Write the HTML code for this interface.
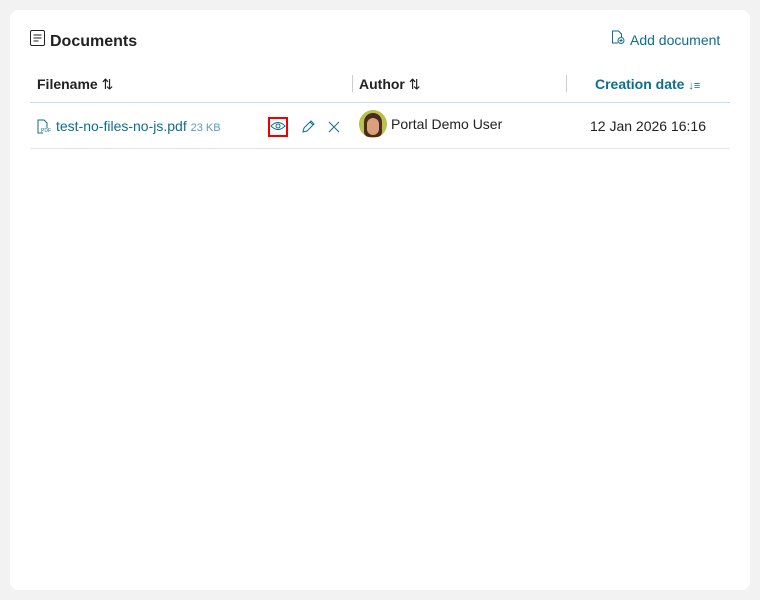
<!DOCTYPE html>
<html><head><style>
body{margin:0;background:#f2f2f2;font-family:"Liberation Sans",sans-serif;width:760px;height:600px;position:relative;overflow:hidden}
.card{position:absolute;left:10px;top:10px;width:740px;height:580px;background:#fff;border-radius:8px}
.a{position:absolute;white-space:nowrap}
.teal{color:#0e6e8c}
</style></head><body>
<div class="card"></div>
<svg class="a" style="left:30px;top:30px" width="15" height="16" viewBox="0 0 15 16"><rect x="0.5" y="0.5" width="14" height="15" rx="1.5" fill="none" stroke="#222"/><path d="M3.5 5h8M3.5 8h8M3.5 11h5" stroke="#222"/></svg>
<div class="a" style="left:50px;top:33px;font-size:16px;font-weight:bold;color:#222">Documents</div>
<svg class="a" style="left:611px;top:30px" width="15" height="15" viewBox="0 0 15 15"><path d="M7 13H1.5V1h6l3 3v3" fill="none" stroke="#0e6e8c"/><circle cx="10" cy="10.5" r="3" fill="none" stroke="#0e6e8c"/><path d="M10 9v3M8.5 10.5h3" stroke="#0e6e8c"/></svg>
<div class="a teal" style="left:630px;top:32px;font-size:14px">Add document</div>
<div class="a" style="left:37px;top:76px;font-size:14px;font-weight:bold;color:#222">Filename <span style="font-weight:normal">⇅</span></div>
<div class="a" style="left:352px;top:75px;width:1px;height:17px;background:#ccc"></div>
<div class="a" style="left:359px;top:76px;font-size:14px;font-weight:bold;color:#222">Author <span style="font-weight:normal">⇅</span></div>
<div class="a" style="left:566px;top:75px;width:1px;height:17px;background:#ccc"></div>
<div class="a teal" style="left:595px;top:76px;font-size:14px;font-weight:bold">Creation date <span style="font-weight:normal;font-size:11px">↓≡</span></div>
<div class="a" style="left:30px;top:102px;width:700px;height:1px;background:#c5dfe8"></div>
<div class="a" style="left:30px;top:148px;width:700px;height:1px;background:#e6e6e6"></div>
<svg class="a" style="left:37px;top:119px" width="14" height="15" viewBox="0 0 14 15"><path d="M6 14H1V1h6l3 3v5" fill="none" stroke="#0e6e8c"/><text x="4" y="13" font-size="5" fill="#0e6e8c" font-family="Liberation Sans">PDF</text></svg>
<div class="a teal" style="left:56px;top:118px;font-size:14px">test-no-files-no-js.pdf <span style="font-size:11px;color:#5a9fb5">23 KB</span></div>
<div class="a" style="left:268px;top:117px;width:16px;height:16px;border:2px solid #e00"></div>
<svg class="a" style="left:270px;top:120px" width="16" height="12" viewBox="0 0 16 12"><path d="M1 6Q8 -1 15 6Q8 13 1 6Z" fill="none" stroke="#0e6e8c"/><circle cx="8" cy="6" r="2" fill="none" stroke="#0e6e8c"/></svg>
<svg class="a" style="left:301px;top:119px" width="15" height="15" viewBox="0 0 15 15"><path d="M2 13l1-4 7-7 3 3-7 7z M9 3l3 3" fill="none" stroke="#0e6e8c"/></svg>
<svg class="a" style="left:328px;top:121px" width="12" height="12" viewBox="0 0 12 12"><path d="M1 1l10 10M11 1L1 11" stroke="#0e6e8c"/></svg>
<div class="a" style="left:359px;top:110px;width:28px;height:28px;border-radius:50%;background:#b8c050"></div>
<div class="a" style="left:364px;top:113px;width:18px;height:24px;border-radius:9px 9px 5px 5px;background:#4a2a1a"></div>
<div class="a" style="left:367px;top:118px;width:12px;height:17px;border-radius:6px;background:#d9a080"></div>
<div class="a" style="left:391px;top:116px;font-size:14px;color:#222">Portal Demo User</div>
<div class="a" style="left:590px;top:118px;font-size:14px;color:#222">12 Jan 2026 16:16</div>
</body></html>
